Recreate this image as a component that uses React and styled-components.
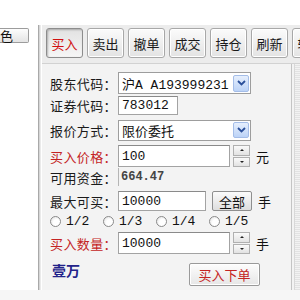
import React from "react";
import styled, { createGlobalStyle } from "styled-components";

const GlobalStyle = createGlobalStyle`
  html, body {
    margin: 0;
    padding: 0;
    background: #fff;
  }
  body {
    font-family: "Noto Sans CJK SC", "Liberation Sans", sans-serif;
    font-size: 13px;
    color: #111;
  }
`;

const Page = styled.div`
  width: 300px;
  height: 300px;
  display: flex;
  flex-direction: column;
  overflow: hidden;
  background: #fff;
`;

const TopBar = styled.div`
  height: 25px;
  background: #fff;
  flex-shrink: 0;
`;

const Main = styled.div`
  display: flex;
  height: 265px;
  flex-shrink: 0;
`;

const BottomBand = styled.div`
  flex: 1;
  background: #f6f6f6;
`;

const LeftCol = styled.div`
  width: 38px;
  background: #fff;
  border-right: 1px solid #a9a9a9;
  box-shadow: 1px 0 0 #d6d6d6, 2px 0 0 #eaeaea;
  padding-top: 3px;
  flex-shrink: 0;
`;

const ColorButton = styled.div`
  width: 29px;
  height: 15px;
  box-sizing: border-box;
  border: 1px solid #9c9c9c;
  border-left: none;
  border-radius: 0 2px 2px 0;
  background: linear-gradient(#fdfdfd, #e4e4e4);
  font-size: 13px;
  line-height: 13px;
  padding-left: 0;
`;

const RightPanel = styled.div`
  flex: 1;
  margin-left: 3px;
  display: flex;
  flex-direction: column;
  background: #ededed;
  min-width: 0;
`;

const TabBar = styled.div`
  display: flex;
  gap: 4px;
  padding: 3px 0 5px 4px;
  overflow: hidden;
  flex-shrink: 0;
  background: #ececec;
  border-bottom: 1px solid #d2d2d2;
`;

const Tab = styled.div`
  width: 37px;
  height: 30px;
  flex-shrink: 0;
  box-sizing: border-box;
  border: 1px solid ${(p) => (p.$active ? "#8c8c8c" : "#a8a8a8")};
  border-radius: 3px;
  background: ${(p) =>
    p.$active
      ? "linear-gradient(#e2e2e2, #f6f6f6)"
      : "linear-gradient(#fbfbfb, #e3e3e3)"};
  box-shadow: ${(p) =>
    p.$active ? "inset 1px 1px 2px rgba(0,0,0,0.25)" : "inset 0 0 0 1px #fff"};
  color: ${(p) => (p.$active ? "#d01010" : "#1a1a1a")};
  font-size: 13px;
  display: flex;
  align-items: center;
  justify-content: center;
  white-space: nowrap;
`;

const Body = styled.div`
  flex: 1;
  display: flex;
  background: #f3f3f3;
`;

const Form = styled.div`
  width: 241px;
  padding: 7px 0 0 8px;
  display: flex;
  flex-direction: column;
  border-right: 1px solid #c4c4c4;
`;

const SideStrip = styled.div`
  flex: 1;
  margin-left: 2px;
  border-left: 1px solid #d8d8d8;
  background: repeating-linear-gradient(#f2f2f2 0 1px, #e2e2e2 1px 2px);
`;

const Row = styled.div`
  height: ${(p) => p.$h}px;
  display: flex;
  align-items: ${(p) => p.$align || "center"};
  flex-shrink: 0;
`;

const Label = styled.div`
  width: 68px;
  flex-shrink: 0;
  font-size: 13px;
  letter-spacing: 0.4px;
  color: ${(p) => (p.$red ? "#c42424" : "#1a1a1a")};
  white-space: nowrap;
`;

const Select = styled.div`
  width: 133px;
  height: ${(p) => p.$h || 22}px;
  box-sizing: border-box;
  border: 1px solid #9d9d9d;
  background: #fff;
  display: flex;
  align-items: center;
  justify-content: space-between;
  font-size: 13px;
`;

const SelectText = styled.span`
  padding-left: 3px;
  font-family: "Liberation Mono", "Noto Sans CJK SC", monospace;
  white-space: nowrap;
`;

const DropButton = styled.div`
  width: 16px;
  height: calc(100% - 3px);
  margin-right: 1px;
  box-sizing: border-box;
  border: 1px solid #a4bde8;
  border-radius: 2px;
  background: linear-gradient(#e6effd, #bcd3f7);
  display: flex;
  align-items: center;
  justify-content: center;
`;

const Input = styled.div`
  width: ${(p) => p.$w}px;
  height: ${(p) => p.$h || 22}px;
  box-sizing: border-box;
  border: 1px solid #a3a3a3;
  border-top-color: #8a8a8a;
  background: #fff;
  padding-left: 3px;
  display: flex;
  align-items: center;
  font-family: "Liberation Mono", monospace;
  font-size: 13px;
`;

const StaticValue = styled.div`
  border-left: 1px solid #b5b5b5;
  padding-left: 2px;
  height: 18px;
  display: flex;
  align-items: center;
  font-family: "Liberation Mono", monospace;
  font-size: 12px;
  font-weight: 600;
  color: #444;
`;

const Spinner = styled.div`
  width: 17px;
  height: 22px;
  margin-left: 3px;
  display: flex;
  flex-direction: column;
  gap: 1px;
`;

const SpinHalf = styled.div`
  flex: 1;
  box-sizing: border-box;
  border: 1px solid #b0b0b0;
  background: linear-gradient(#fafafa, #e2e2e2);
  display: flex;
  align-items: center;
  justify-content: center;
  &::after {
    content: "";
    border-left: 2px solid transparent;
    border-right: 2px solid transparent;
    ${(p) =>
      p.$up ? "border-bottom: 2px solid #222;" : "border-top: 2px solid #222;"}
  }
`;

const Unit = styled.span`
  margin-left: 6px;
  font-size: 13px;
`;

const GrayButton = styled.div`
  width: 40px;
  height: 20px;
  margin-left: 6px;
  box-sizing: border-box;
  border: 1px solid #8f8f8f;
  border-radius: 2px;
  background: linear-gradient(#fbfbfb, #dedede);
  display: flex;
  align-items: center;
  justify-content: center;
  font-size: 13px;
`;

const RadioItem = styled.div`
  width: 53px;
  display: flex;
  align-items: center;
  gap: 5px;
  flex-shrink: 0;
`;

const RadioDot = styled.span`
  width: 11px;
  height: 11px;
  box-sizing: border-box;
  border-radius: 50%;
  border: 1px solid #8a8a8a;
  background: radial-gradient(circle at 65% 65%, #fff 40%, #dcdcdc 100%);
`;

const RadioText = styled.span`
  font-family: "Liberation Mono", monospace;
  font-size: 13px;
`;

const AmountWords = styled.div`
  width: 69px;
  padding-left: 2px;
  padding-top: 2px;
  font-size: 14px;
  font-weight: 600;
  color: #23238a;
  flex-shrink: 0;
`;

const SubmitButton = styled.div`
  width: 71px;
  height: 23px;
  margin-top: 5px;
  margin-left: 68px;
  box-sizing: border-box;
  border: 1px solid #9a9a9a;
  border-radius: 2px;
  background: linear-gradient(#fdfdfd, #e6e6e6);
  box-shadow: inset 0 0 0 1px #fff;
  color: #c42424;
  font-size: 13px;
  display: flex;
  align-items: center;
  justify-content: center;
`;

const Chevron = () => (
  <svg width="9" height="6" viewBox="0 0 9 6">
    <path d="M1 1 L4.5 4.5 L8 1" fill="none" stroke="#2a4f9a" strokeWidth="1.8" />
  </svg>
);

const tabs = ["买入", "卖出", "撤单", "成交", "持仓", "刷新", "转账"];
const radios = ["1/2", "1/3", "1/4", "1/5"];

export default function App() {
  return (
    <Page>
      <GlobalStyle />
      <TopBar />
      <Main>
        <LeftCol>
          <ColorButton>色</ColorButton>
        </LeftCol>
        <RightPanel>
          <TabBar>
            {tabs.map((t, i) => (
              <Tab key={t} $active={i === 0}>
                {t}
              </Tab>
            ))}
          </TabBar>
          <Body>
            <Form>
              <Row $h={24}>
                <Label>股东代码：</Label>
                <Select>
                  <SelectText>沪A A193999231</SelectText>
                  <DropButton>
                    <Chevron />
                  </DropButton>
                </Select>
              </Row>
              <Row $h={20}>
                <Label>证券代码：</Label>
                <Input $w={60} $h={19}>783012</Input>
              </Row>
              <Row $h={30}>
                <Label>报价方式：</Label>
                <Select $h={21}>
                  <SelectText>限价委托</SelectText>
                  <DropButton>
                    <Chevron />
                  </DropButton>
                </Select>
              </Row>
              <Row $h={22}>
                <Label $red>买入价格：</Label>
                <Input $w={112}>100</Input>
                <Spinner>
                  <SpinHalf $up />
                  <SpinHalf />
                </Spinner>
                <Unit>元</Unit>
              </Row>
              <Row $h={20}>
                <Label>可用资金：</Label>
                <StaticValue>664.47</StaticValue>
              </Row>
              <Row $h={28}>
                <Label>最大可买：</Label>
                <Input $w={88} $h={20}>10000</Input>
                <GrayButton>全部</GrayButton>
                <Unit>手</Unit>
              </Row>
              <Row $h={13}>
                {radios.map((r) => (
                  <RadioItem key={r}>
                    <RadioDot />
                    <RadioText>{r}</RadioText>
                  </RadioItem>
                ))}
              </Row>
              <Row $h={30}>
                <Label $red>买入数量：</Label>
                <Input $w={112}>10000</Input>
                <Spinner>
                  <SpinHalf $up />
                  <SpinHalf />
                </Spinner>
                <Unit>手</Unit>
              </Row>
              <Row $h={32} $align="flex-start">
                <AmountWords>壹万</AmountWords>
                <SubmitButton>买入下单</SubmitButton>
              </Row>
            </Form>
            <SideStrip />
          </Body>
        </RightPanel>
      </Main>
      <BottomBand />
    </Page>
  );
}
